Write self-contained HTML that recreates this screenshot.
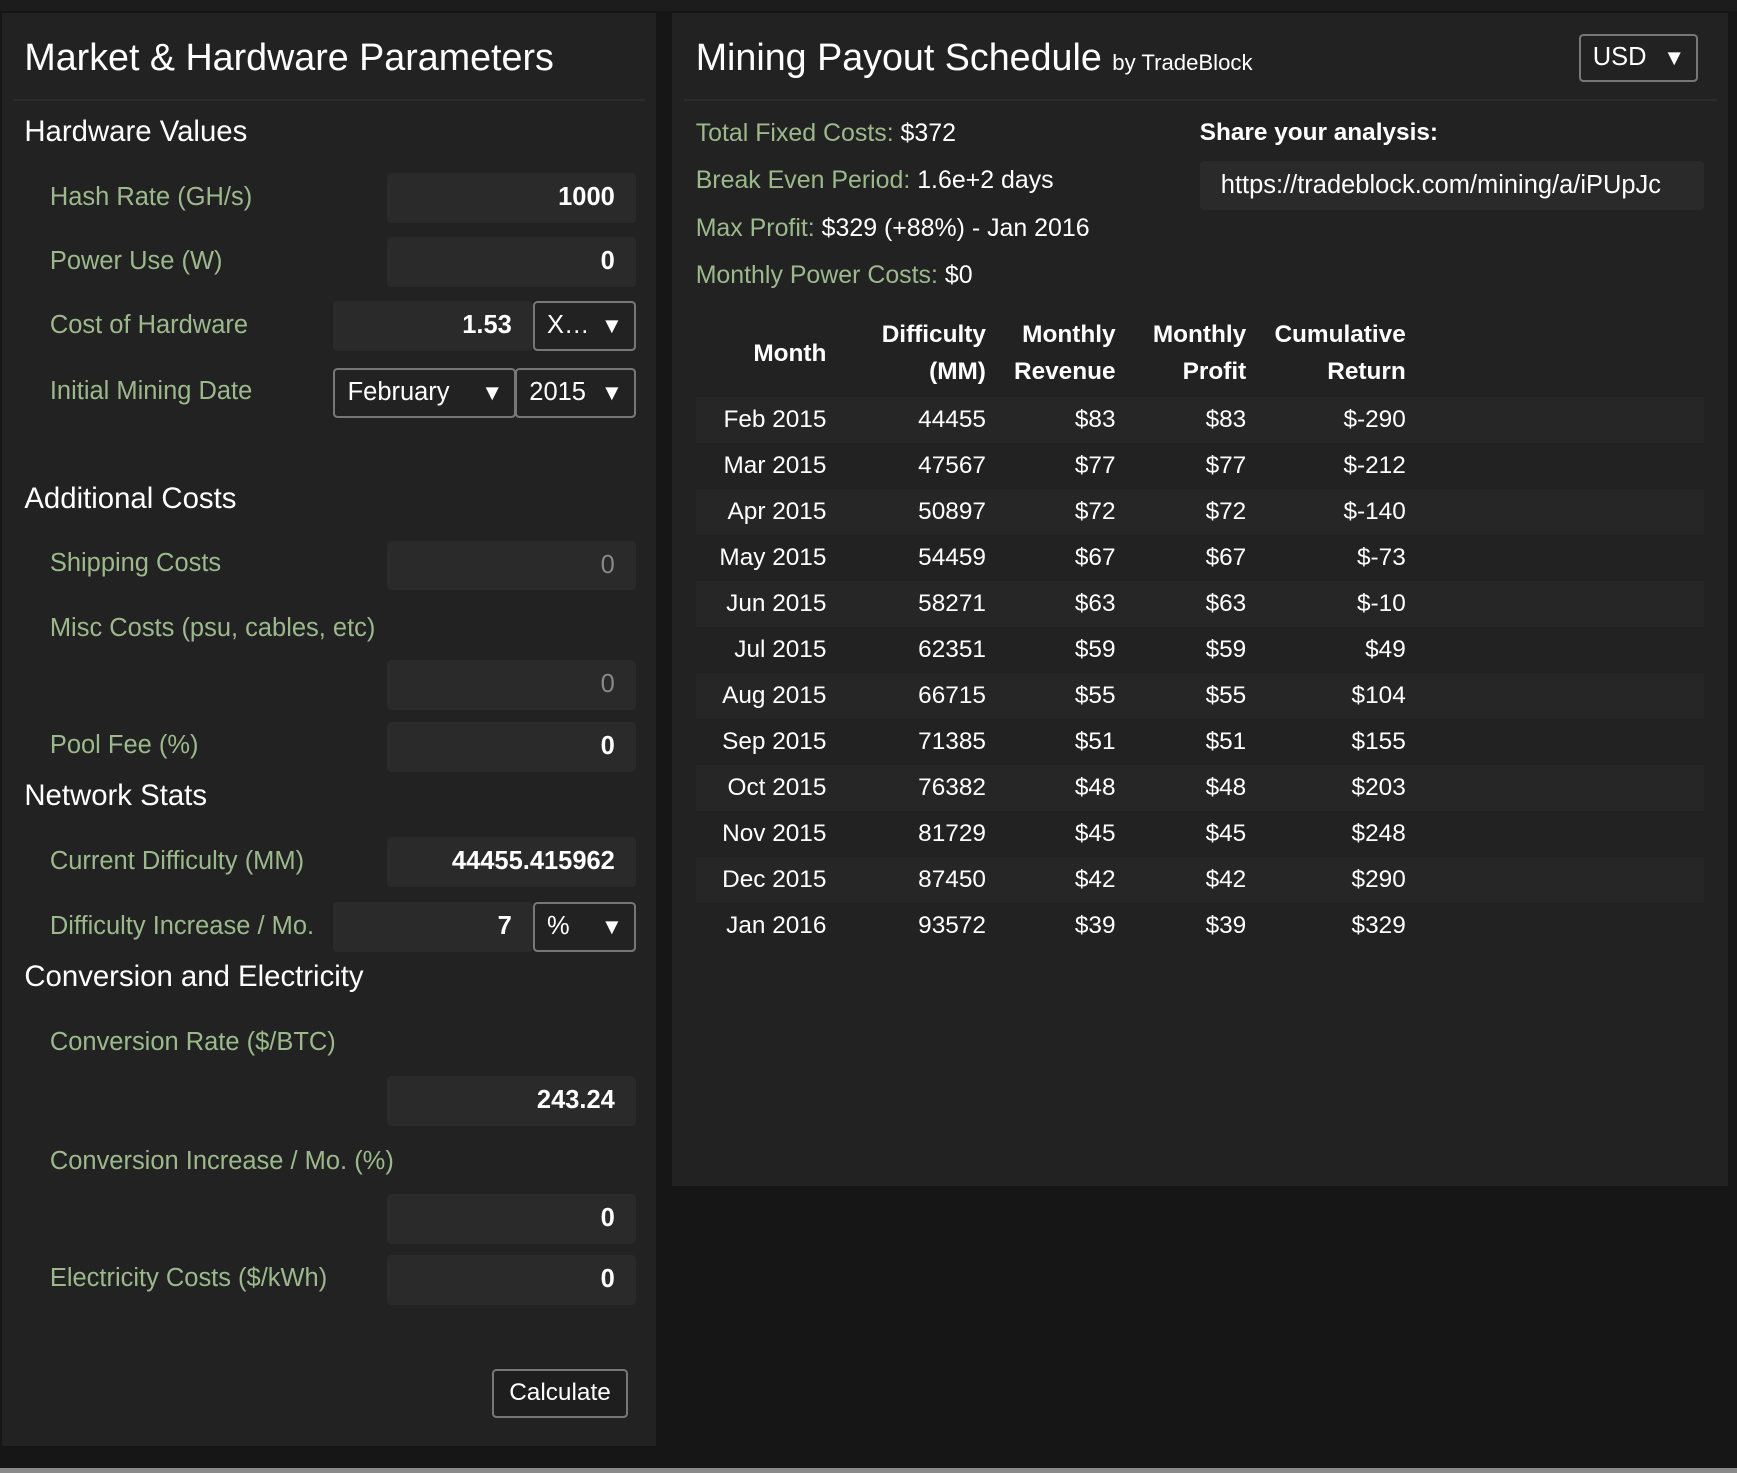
<!DOCTYPE html>
<html><head><meta charset="utf-8"><style>
html{zoom:1.1078}
body{margin:0;width:1568px;height:1330px;background:#161616;font-family:"Liberation Sans",Arial,sans-serif;color:#fff;position:relative;overflow:hidden}
.p{position:absolute;background:#222}
.a{position:absolute;white-space:nowrap}
.h1{font-size:34px;line-height:40px}
.h2{font-size:26.5px;line-height:30px}
.lb{font-size:23px;line-height:26px;color:#9cb98c;left:45px}
.in{position:absolute;background:#2a2a2a;border-radius:4px;height:45px;font-size:23px;line-height:45px;text-align:right;padding-right:19px;box-sizing:border-box;font-weight:bold}
.g{color:#888;font-weight:normal}
.sel{position:absolute;border:2px solid #777;border-radius:4px;height:45px;box-sizing:border-box;font-size:23px;line-height:41px;padding-left:11px}
.sel span{position:absolute;right:10px;top:0;font-size:20px}
.hr{position:absolute;height:2px;background:#2b2b2b}
.st{font-size:22.5px;line-height:26px;left:628px;color:#fff}
.st b{color:#9cb98c;font-weight:normal}
table{position:absolute;left:628px;top:280px;border-collapse:collapse;font-size:22px}
td,th{text-align:right;padding:0 18px 0 0;white-space:nowrap}
th{font-weight:bold;line-height:34px;vertical-align:middle;height:78px}
td{height:41.6px;line-height:41.6px}
tr.s td{background:#262626}
</style></head><body>
<div style="position:absolute;left:0;top:0;width:1568px;height:10px;background:#1c1c1c"></div>
<div class="p" style="left:2px;top:12px;width:590px;height:1293px"></div>
<div class="p" style="left:607px;top:12px;width:953px;height:1059px"></div>
<div style="position:absolute;left:0;top:1325px;width:1568px;height:5px;background:#8a8a8a"></div>

<div class="a h1" style="left:22px;top:32px">Market &amp; Hardware Parameters</div>
<div class="hr" style="left:12px;top:89px;width:570px"></div>
<div class="a h2" style="left:22px;top:104px">Hardware Values</div>
<div class="a lb" style="top:165px">Hash Rate (GH/s)</div>
<div class="in" style="left:349px;top:156px;width:225px">1000</div>
<div class="a lb" style="top:223px">Power Use (W)</div>
<div class="in" style="left:349px;top:214px;width:225px">0</div>
<div class="a lb" style="top:281px">Cost of Hardware</div>
<div class="in" style="left:301px;top:272px;width:180px">1.53</div>
<div class="sel" style="left:481px;top:272px;width:93px">X…<span>▼</span></div>
<div class="a lb" style="top:340px">Initial Mining Date</div>
<div class="sel" style="left:301px;top:332px;width:165px">February<span>▼</span></div>
<div class="sel" style="left:465px;top:332px;width:109px">2015<span>▼</span></div>

<div class="a h2" style="left:22px;top:435px">Additional Costs</div>
<div class="a lb" style="top:496px">Shipping Costs</div>
<div class="in g" style="left:349px;top:488px;width:225px">0</div>
<div class="a lb" style="top:554px">Misc Costs (psu, cables, etc)</div>
<div class="in g" style="left:349px;top:596px;width:225px">0</div>
<div class="a lb" style="top:660px">Pool Fee (%)</div>
<div class="in" style="left:349px;top:652px;width:225px">0</div>

<div class="a h2" style="left:22px;top:703px">Network Stats</div>
<div class="a lb" style="top:765px">Current Difficulty (MM)</div>
<div class="in" style="left:349px;top:756px;width:225px">44455.415962</div>
<div class="a lb" style="top:823px">Difficulty Increase / Mo.</div>
<div class="in" style="left:301px;top:814px;width:180px">7</div>
<div class="sel" style="left:481px;top:814px;width:93px">%<span>▼</span></div>

<div class="a h2" style="left:22px;top:867px">Conversion and Electricity</div>
<div class="a lb" style="top:928px">Conversion Rate ($/BTC)</div>
<div class="in" style="left:349px;top:971px;width:225px">243.24</div>
<div class="a lb" style="top:1035px">Conversion Increase / Mo. (%)</div>
<div class="in" style="left:349px;top:1078px;width:225px">0</div>
<div class="a lb" style="top:1141px">Electricity Costs ($/kWh)</div>
<div class="in" style="left:349px;top:1133px;width:225px">0</div>
<div class="a" style="left:444px;top:1236px;width:123px;height:44px;box-sizing:border-box;border:2px solid #777;border-radius:4px;text-align:center;font-size:22px;line-height:40px;background:#1e1e1e">Calculate</div>

<div class="a h1" style="left:628px;top:32px">Mining Payout Schedule <span style="font-size:20px">by TradeBlock</span></div>
<div class="sel" style="left:1425px;top:31px;width:108px;height:43px;line-height:39px">USD<span>▼</span></div>
<div class="hr" style="left:617px;top:89px;width:933px"></div>
<div class="a st" style="top:107px"><b>Total Fixed Costs:</b> $372</div>
<div class="a st" style="top:150px"><b>Break Even Period:</b> 1.6e+2 days</div>
<div class="a st" style="top:193px"><b>Max Profit:</b> $329 (+88%) - Jan 2016</div>
<div class="a st" style="top:236px"><b>Monthly Power Costs:</b> $0</div>
<div class="a" style="left:1083px;top:107px;font-size:22px;font-weight:bold">Share your analysis:</div>
<div class="a" style="left:1083px;top:145px;width:455px;height:45px;background:#2a2a2a;border-radius:4px;overflow:hidden;font-size:23px;line-height:45px;padding-left:19px;box-sizing:border-box">https://tradeblock.com/mining/a/iPUpJc</div>

<table>
<tr><th style="width:118px">Month</th><th style="width:126px">Difficulty<br>(MM)</th><th style="width:99px">Monthly<br>Revenue</th><th style="width:100px">Monthly<br>Profit</th><th style="width:126px">Cumulative<br>Return</th><th style="width:251px;padding:0"></th></tr>
<tr class="s"><td>Feb 2015</td><td>44455</td><td>$83</td><td>$83</td><td>$-290</td><td></td></tr>
<tr><td>Mar 2015</td><td>47567</td><td>$77</td><td>$77</td><td>$-212</td><td></td></tr>
<tr class="s"><td>Apr 2015</td><td>50897</td><td>$72</td><td>$72</td><td>$-140</td><td></td></tr>
<tr><td>May 2015</td><td>54459</td><td>$67</td><td>$67</td><td>$-73</td><td></td></tr>
<tr class="s"><td>Jun 2015</td><td>58271</td><td>$63</td><td>$63</td><td>$-10</td><td></td></tr>
<tr><td>Jul 2015</td><td>62351</td><td>$59</td><td>$59</td><td>$49</td><td></td></tr>
<tr class="s"><td>Aug 2015</td><td>66715</td><td>$55</td><td>$55</td><td>$104</td><td></td></tr>
<tr><td>Sep 2015</td><td>71385</td><td>$51</td><td>$51</td><td>$155</td><td></td></tr>
<tr class="s"><td>Oct 2015</td><td>76382</td><td>$48</td><td>$48</td><td>$203</td><td></td></tr>
<tr><td>Nov 2015</td><td>81729</td><td>$45</td><td>$45</td><td>$248</td><td></td></tr>
<tr class="s"><td>Dec 2015</td><td>87450</td><td>$42</td><td>$42</td><td>$290</td><td></td></tr>
<tr><td>Jan 2016</td><td>93572</td><td>$39</td><td>$39</td><td>$329</td><td></td></tr>
</table>
</body></html>
